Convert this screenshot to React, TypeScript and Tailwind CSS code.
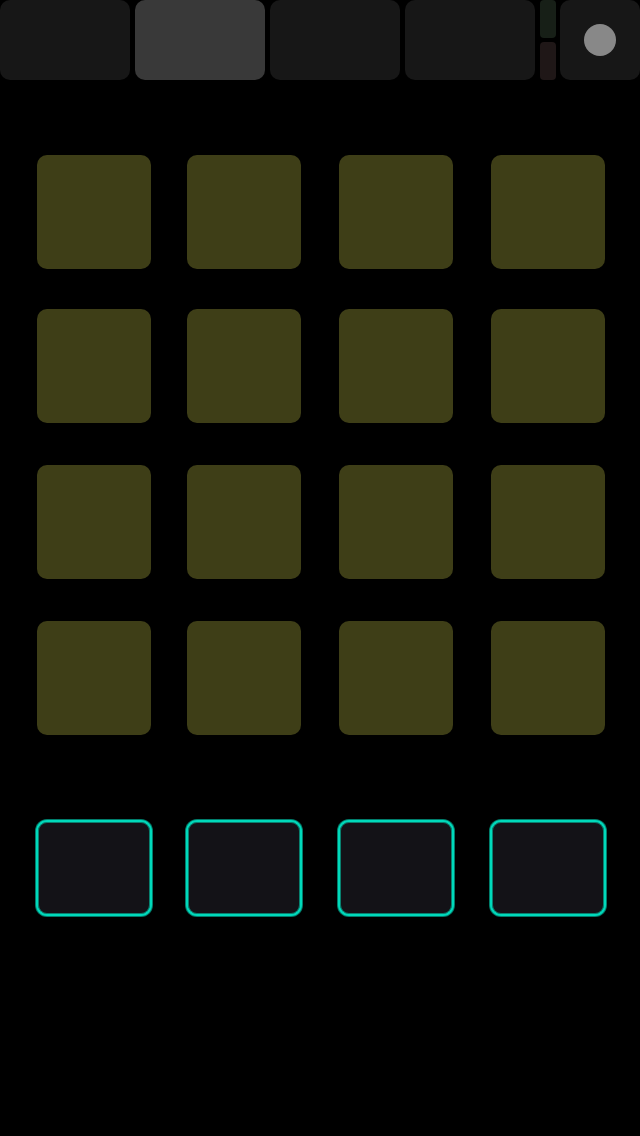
import { useState } from "react";

const banks = [1, 2, 3, 4];
const steps = Array.from({ length: 16 }, (_, i) => i + 1);
const triggers = [1, 2, 3, 4];

export default function App() {
  const [bank, setBank] = useState(2);

  return (
    <main className="min-h-screen bg-black">
      <header className="flex h-20 gap-1">
        <nav aria-label="Banks" className="flex flex-1 gap-[5px] pr-px">
          {banks.map((n) => (
            <button
              key={n}
              type="button"
              aria-label={`Bank ${n}`}
              aria-pressed={bank === n}
              onClick={() => setBank(n)}
              className={`flex-1 rounded-[10px] ${bank === n ? "bg-[#393939]" : "bg-[#171717]"}`}
            />
          ))}
        </nav>
        <div className="flex w-4 flex-col gap-1">
          <div className="flex-1 rounded bg-[#171f17]" />
          <div className="flex-1 rounded bg-[#1f1717]" />
        </div>
        <button
          type="button"
          aria-label="Record"
          className="flex w-20 items-center justify-center rounded-[10px] bg-[#171717]"
        >
          <span className="size-8 rounded-full bg-[#888888]" />
        </button>
      </header>

      <section
        aria-label="Steps"
        className="grid grid-cols-[150fr_152fr_152fr_114px] grid-rows-[154px_156px_156px_114px] pt-[75px] pr-[35px] pl-[37px]"
      >
        {steps.map((n) => (
          <button
            key={n}
            type="button"
            aria-label={`Step ${n}`}
            className="size-[114px] rounded-[10px] bg-[#3e3e17]"
          />
        ))}
      </section>

      <section
        aria-label="Triggers"
        className="grid grid-cols-[150fr_152fr_152fr_116px] pt-[85px] pr-[34px] pl-9"
      >
        {triggers.map((n) => (
          <button
            key={n}
            type="button"
            aria-label={`Trigger ${n}`}
            className="h-24 w-[116px] rounded-[11px] border-2 border-[#00d9bb] bg-[#131217] shadow-[0_0_0_1px_#007d6b,inset_0_0_0_1px_#08806f]"
          />
        ))}
      </section>
    </main>
  );
}
